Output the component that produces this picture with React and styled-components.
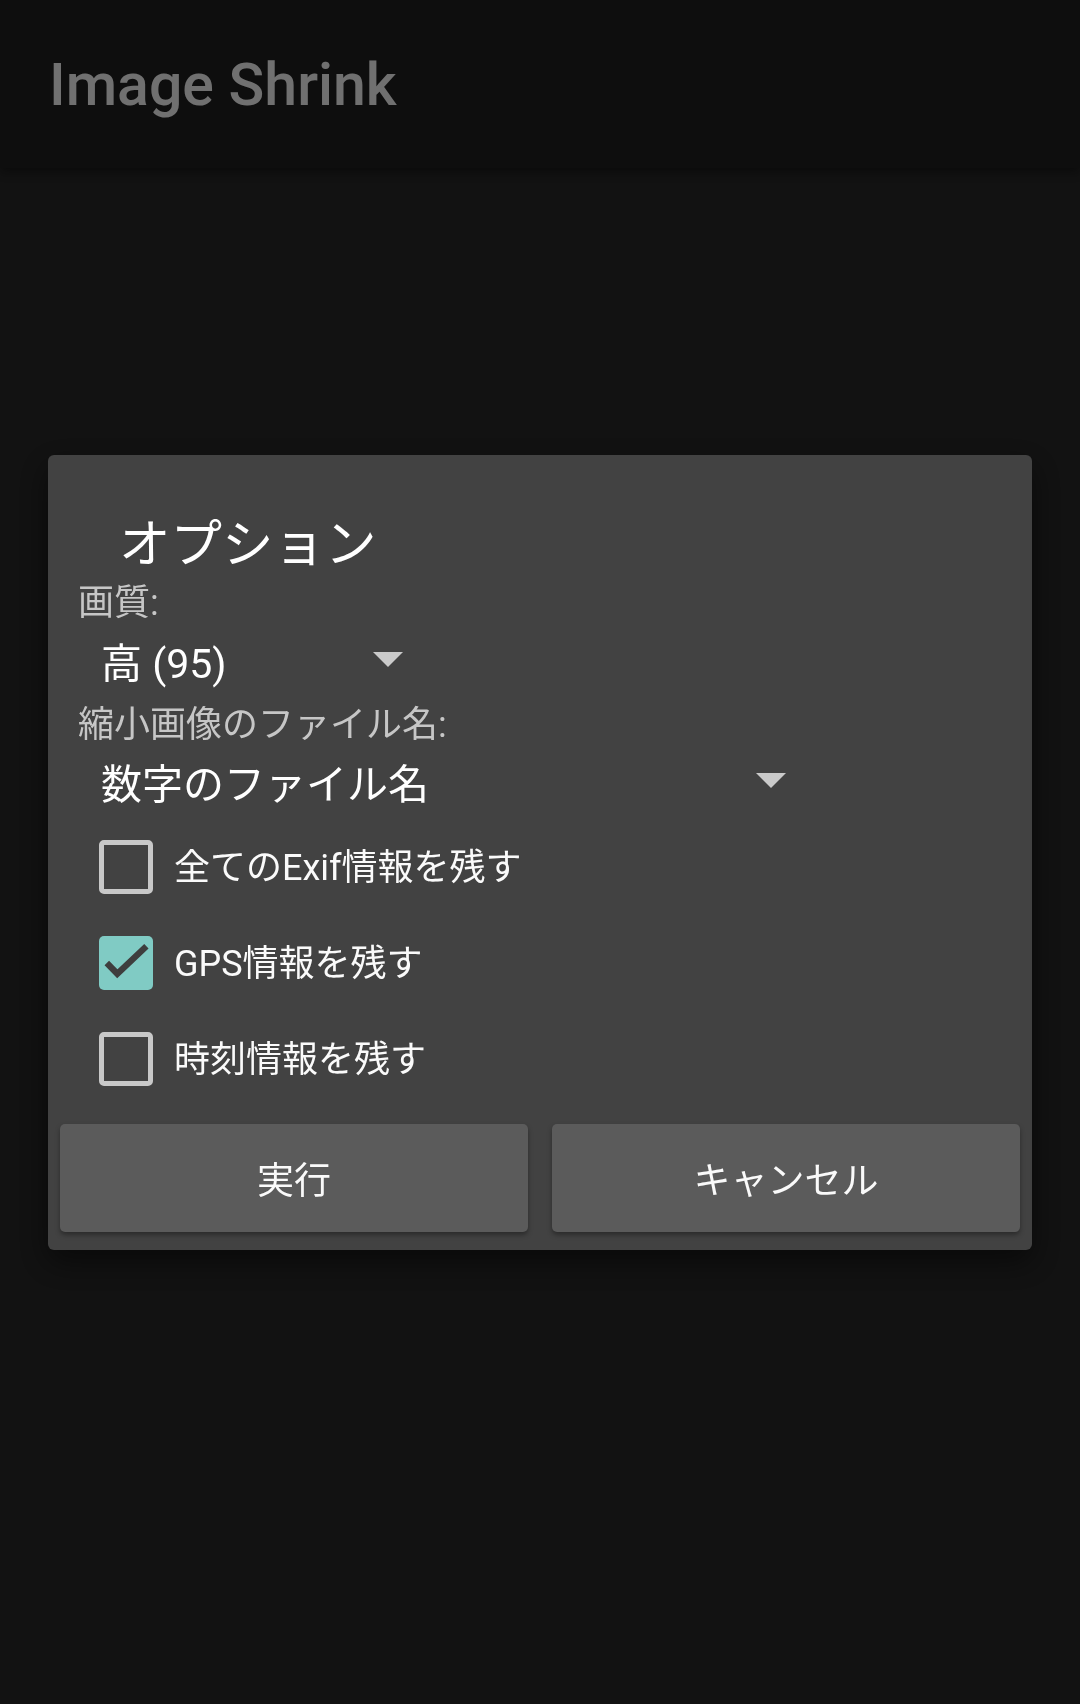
import React from 'react';
import styled, { createGlobalStyle } from 'styled-components';

const GlobalStyle = createGlobalStyle`
  html, body {
    margin: 0;
    padding: 0;
    background: #292929;
  }
  body {
    font-family: Roboto, "Noto Sans CJK JP", sans-serif;
    -webkit-font-smoothing: antialiased;
  }
  * {
    box-sizing: border-box;
  }
`;

const Screen = styled.div`
  min-height: 100vh;
  background: #292929;
`;

const AppBar = styled.header`
  height: 168px;
  display: flex;
  align-items: center;
  padding-left: 49px;
  background: #202020;
  box-shadow: 0 3px 10px rgba(0, 0, 0, 0.45);
`;

const AppTitle = styled.h1`
  margin: 0;
  font-size: 59px;
  font-weight: 500;
  color: #ffffff;
`;

/* dimmed layer behind the dialog */
const Scrim = styled.div`
  position: fixed;
  inset: 0;
  display: flex;
  align-items: center;
  justify-content: center;
  background: rgba(0, 0, 0, 0.56);
`;

const Dialog = styled.div`
  width: 984px;
  padding: 55px 0 18px;
  background: #424242;
  border-radius: 6px;
  box-shadow: 0 12px 30px rgba(0, 0, 0, 0.5);
`;

const DialogTitle = styled.div`
  height: 60px;
  display: flex;
  align-items: center;
  padding-left: 71px;
  margin-bottom: 7px;
  font-size: 51.5px;
  color: #ffffff;
`;

const Body = styled.div`
  padding: 0 30px;
`;

const Label = styled.div`
  height: 44px;
  display: flex;
  align-items: center;
  font-size: 36px;
  color: #c6c6c6;
`;

const Spinner = styled.div`
  width: ${(p) => p.$w}px;
  height: ${(p) => p.$h}px;
  display: flex;
  align-items: center;
  justify-content: space-between;
  padding: 0 17px 0 23px;
  font-size: 41px;
  color: #ffffff;
`;

const Arrow = styled.span`
  width: 0;
  height: 0;
  border-left: 15px solid transparent;
  border-right: 15px solid transparent;
  border-top: 15px solid #cacaca;
`;

const CheckRow = styled.label`
  height: 96px;
  display: flex;
  align-items: center;
  gap: 21px;
  padding-left: 21px;
  font-size: 36px;
  color: #fafafa;
`;

const CheckText = styled.span`
  padding-bottom: 6px;
`;

const Box = styled.span`
  width: 54px;
  height: 54px;
  flex: none;
  display: flex;
  align-items: center;
  justify-content: center;
  border-radius: 5px;
  border: ${(p) => (p.$checked ? 'none' : '5px solid #c8c8c8')};
  background: ${(p) => (p.$checked ? '#80cbc4' : 'transparent')};
`;

const Buttons = styled.div`
  display: grid;
  grid-template-columns: 1fr 1fr;
  gap: 24px;
  margin-top: 17px;
  padding: 0 12px;
`;

const Button = styled.button`
  height: 108px;
  border: none;
  border-radius: 5px;
  background: #5b5b5b;
  color: #fafafa;
  font-family: inherit;
  font-size: 37px;
  box-shadow: 0 3px 5px rgba(0, 0, 0, 0.35);
`;

const Check = ({ checked, children }) => (
  <CheckRow>
    <Box $checked={checked}>
      {checked && (
        <svg width="54" height="54" viewBox="0 0 18 18">
          <polyline
            points="2.6,9 6.1,12.6 15.8,3.4"
            fill="none"
            stroke="#3e3e3e"
            strokeWidth="2.1"
          />
        </svg>
      )}
    </Box>
    <CheckText>{children}</CheckText>
  </CheckRow>
);

const App = () => {
  return (
    <Screen>
      <GlobalStyle />
      <AppBar>
        <AppTitle>Image Shrink</AppTitle>
      </AppBar>
      <Scrim>
        <Dialog>
          <DialogTitle>オプション</DialogTitle>
          <Body>
            <Label>画質:</Label>
            <Spinner $w={342} $h={78}>
              <span>高 (95)</span>
              <Arrow />
            </Spinner>
            <Label>縮小画像のファイル名:</Label>
            <Spinner $w={725} $h={76}>
              <span>数字のファイル名</span>
              <Arrow />
            </Spinner>
            <Check>全てのExif情報を残す</Check>
            <Check checked>GPS情報を残す</Check>
            <Check>時刻情報を残す</Check>
          </Body>
          <Buttons>
            <Button>実行</Button>
            <Button>キャンセル</Button>
          </Buttons>
        </Dialog>
      </Scrim>
    </Screen>
  );
};

export default App;
